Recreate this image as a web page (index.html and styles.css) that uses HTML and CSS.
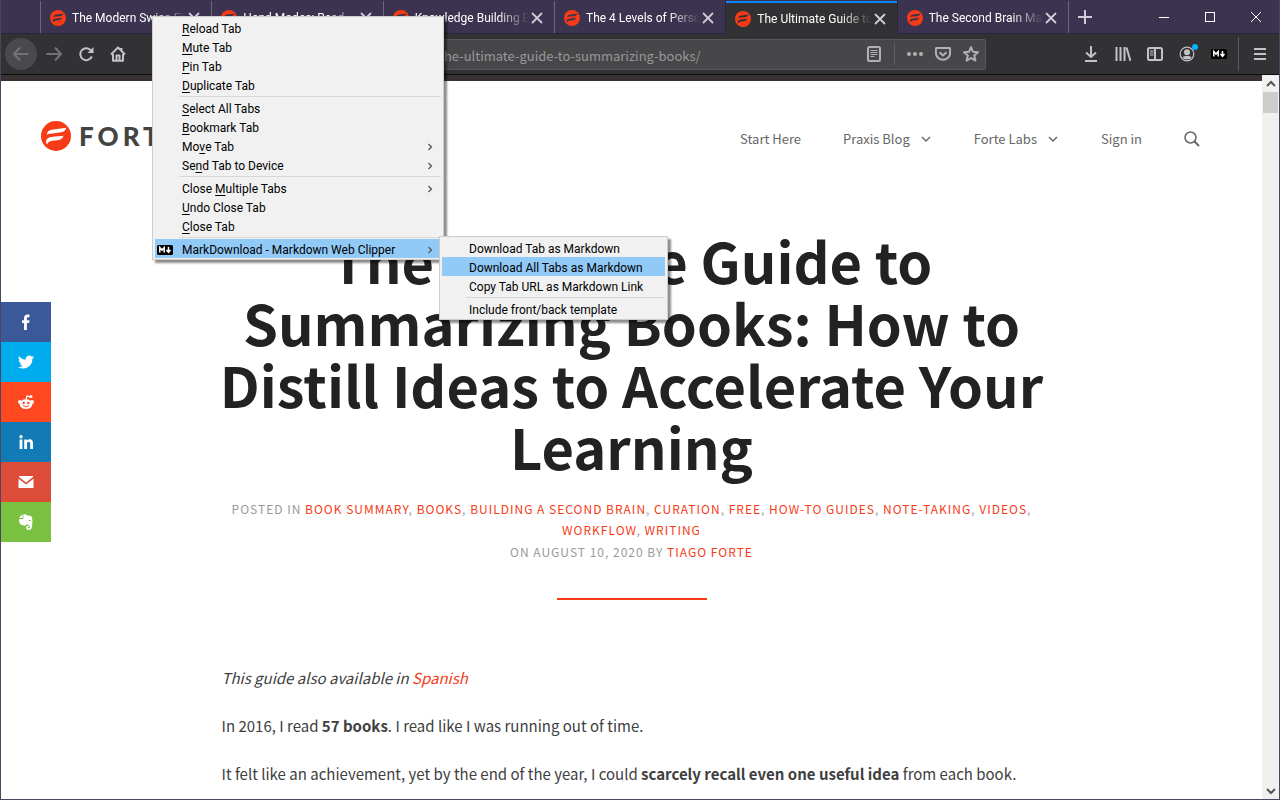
FILE: index.html
```html
<!DOCTYPE html>
<html lang="en">
<head>
<meta charset="utf-8">
<title>The Ultimate Guide to Summarizing Books</title>
<link rel="stylesheet" href="styles.css">
</head>
<body>
<svg class="defs" aria-hidden="true">
  <symbol id="forte" viewBox="0 0 32 32">
    <circle cx="16" cy="16" r="16" fill="#f63b16"/>
    <path class="swoosh" d="M6 14.500C7 10.500 9 9.500 13 9L27 7.200C26 10.500 24 11.800 20 12.300L12 13.200C9 13.500 7.500 13.500 6 14.500ZM5.500 21C7 17.800 9 17.300 13 16.900L24 15.600C23 18.800 21 20 17.500 20.400L12 21C9 21.500 7 22.500 6.500 25C5.500 23.500 5.200 22.500 5.500 21Z"/>
  </symbol>
  <symbol id="close" viewBox="0 0 16 16"><path d="M3.500 3.500l9 9M12.500 3.500l-9 9" fill="none" stroke="currentColor" stroke-width="1.800" stroke-linecap="round"/></symbol>
  <symbol id="chev" viewBox="0 0 10 10"><path d="M3.500 2l3 3-3 3" fill="none" stroke="currentColor" stroke-width="1.300"/></symbol>
  <symbol id="down" viewBox="0 0 12 12"><path d="M2 4l4 4 4-4" fill="none" stroke="currentColor" stroke-width="1.400"/></symbol>
  <symbol id="md" viewBox="0 0 16 10"><rect width="16" height="10" rx="1.500" fill="#000"/><path d="M2.800 7.500v-5l2.200 2.500 2.200-2.500v5M11.500 2v5M9.500 5l2 2.300 2-2.300" fill="none" stroke="#fff" stroke-width="1.500"/></symbol>
</svg>

<div class="window">
  <header class="tabbar">
    <div class="tabs" role="tablist">
      <div class="tab" role="tab"><svg class="fav"><use href="#forte"/></svg><span class="tab-title">The Modern Swiss Fit</span><button class="tab-close" aria-label="Close tab"><svg><use href="#close"/></svg></button></div>
      <div class="tab" role="tab"><svg class="fav"><use href="#forte"/></svg><span class="tab-title">Hand Modes: Read</span><button class="tab-close" aria-label="Close tab"><svg><use href="#close"/></svg></button></div>
      <div class="tab" role="tab"><svg class="fav"><use href="#forte"/></svg><span class="tab-title">Knowledge Building B</span><button class="tab-close" aria-label="Close tab"><svg><use href="#close"/></svg></button></div>
      <div class="tab" role="tab"><svg class="fav"><use href="#forte"/></svg><span class="tab-title">The 4 Levels of Person</span><button class="tab-close" aria-label="Close tab"><svg><use href="#close"/></svg></button></div>
      <div class="tab active" role="tab" aria-selected="true"><svg class="fav"><use href="#forte"/></svg><span class="tab-title">The Ultimate Guide to</span><button class="tab-close" aria-label="Close tab"><svg><use href="#close"/></svg></button></div>
      <div class="tab" role="tab"><svg class="fav"><use href="#forte"/></svg><span class="tab-title">The Second Brain Ma</span><button class="tab-close" aria-label="Close tab"><svg><use href="#close"/></svg></button></div>
    </div>
    <button class="new-tab" aria-label="New tab"><svg viewBox="0 0 16 16"><path d="M8 1v14M1 8h14" stroke="currentColor" stroke-width="2"/></svg></button>
    <div class="win-controls">
      <button aria-label="Minimize"><svg viewBox="0 0 12 12"><path d="M1 6.500h10" stroke="currentColor"/></svg></button>
      <button aria-label="Maximize"><svg viewBox="0 0 12 12"><rect x="1.500" y="1.500" width="9" height="9" fill="none" stroke="currentColor"/></svg></button>
      <button aria-label="Close"><svg viewBox="0 0 12 12"><path d="M1 1l10 10M11 1L1 11" stroke="currentColor"/></svg></button>
    </div>
  </header>

  <div class="toolbar">
    <button class="tool back" aria-label="Back"><svg viewBox="0 0 16 16"><path d="M15.500 8H1M7 1.500L1 8l6 6.500" class="line dim"/></svg></button>
    <button class="tool" aria-label="Forward"><svg viewBox="0 0 16 16"><path d="M.5 8H15M9 1.500L15 8l-6 6.500" class="line dim"/></svg></button>
    <button class="tool" aria-label="Reload"><svg viewBox="0 0 16 16"><path d="M13 4.500A6 6 0 1 0 13.800 10.500" class="line"/><path d="M15.500 1v6H9.500z" fill="currentColor"/></svg></button>
    <button class="tool" aria-label="Home"><svg viewBox="0 0 16 16"><path d="M1 8.500L8 1.500l7 7M3 8v6.800h10V8M11.500 2v3" class="line"/><path d="M6.500 15V9.500h3V15" class="line"/></svg></button>
    <div class="urlbar">
      <input type="text" aria-label="Address" value="the-ultimate-guide-to-summarizing-books/">
      <button aria-label="Reader view"><svg viewBox="0 0 16 16"><rect x="2" y="1" width="12" height="14" rx="1.500" class="line"/><path d="M4.500 4.500h7M4.500 6.500h7M4.500 8.500h7M4.500 10.500h4" stroke="currentColor"/></svg></button>
      <span class="url-sep"></span>
      <button aria-label="Page actions"><svg viewBox="0 0 16 16" fill="currentColor"><circle cx="2" cy="8" r="2"/><circle cx="8" cy="8" r="2"/><circle cx="14" cy="8" r="2"/></svg></button>
      <button aria-label="Save to Pocket"><svg viewBox="0 0 16 16"><path d="M1.500 2h13a.6.6 0 0 1 .6.600V7a7.100 6.800 0 0 1-14.200 0V2.600A.6.6 0 0 1 1.500 2zM4.500 6.200L8 9.500l3.500-3.300" class="line"/></svg></button>
      <button aria-label="Bookmark"><svg viewBox="0 0 16 16"><path d="M8 1.200l2 4.600 5 .5-3.800 3.300 1.200 5L8 12l-4.400 2.600 1.200-5L1 6.300l5-.5z" class="line"/></svg></button>
    </div>
    <div class="tools-right">
      <button class="tool" aria-label="Downloads"><svg viewBox="0 0 16 16"><path d="M8 0v11M3 6.500L8 11l5-4.500M2 15h12" class="line"/></svg></button>
      <button class="tool" aria-label="Library"><svg viewBox="0 0 16 16"><path d="M1.500 1v14M5.500 1v14M9.500 1v14M11.500 1.500l4 13.500" class="line"/></svg></button>
      <button class="tool" aria-label="Sidebars"><svg viewBox="0 0 16 16"><rect x="1" y="2" width="14" height="12" rx="1.500" class="line"/><path d="M8 2v12" class="line"/><path d="M3 5h3.500M3 7h3.500M3 9h3.500" stroke="currentColor"/></svg></button>
      <button class="tool account" aria-label="Account"><svg viewBox="0 0 16 16"><circle cx="8" cy="8" r="6.800" fill="none" stroke="currentColor" stroke-width="1.200"/><circle cx="8" cy="6.200" r="3" fill="currentColor"/><path d="M3.400 11.500C5 9.600 11 9.600 12.600 11.500 11 14 5 14 3.400 11.500z" fill="currentColor"/></svg></button>
      <button class="tool" aria-label="MarkDownload"><svg class="md-icon"><use href="#md"/></svg></button>
      <span class="tool-sep"></span>
      <button class="tool" aria-label="Open menu"><svg viewBox="0 0 16 16"><path d="M2 3h12M2 8h12M2 13h12" class="line"/></svg></button>
    </div>
  </div>

  <div class="viewport">
    <div class="page">
      <div class="site-head">
        <a class="logo" href="#"><svg><use href="#forte"/></svg><span>FORTE</span></a>
        <nav>
          <a href="#">Start Here</a>
          <a href="#">Praxis Blog <svg><use href="#down"/></svg></a>
          <a href="#">Forte Labs <svg><use href="#down"/></svg></a>
          <a href="#">Sign in</a>
          <a class="search" href="#" aria-label="Search"><svg viewBox="0 0 16 16"><circle cx="6.500" cy="6.500" r="5.500" fill="none" stroke="currentColor" stroke-width="1.500"/><path d="M10.500 10.500L15 15" stroke="currentColor" stroke-width="2"/></svg></a>
        </nav>
      </div>
      <article>
        <h1>The Ultimate Guide to Summarizing Books: How to Distill Ideas to Accelerate Your Learning</h1>
        <div class="meta">
          <p>Posted in <a href="#">Book Summary</a>, <a href="#">Books</a>, <a href="#">Building a Second Brain</a>, <a href="#">Curation</a>, <a href="#">Free</a>, <a href="#">How-To Guides</a>, <a href="#">Note-Taking</a>, <a href="#">Videos</a>, <a href="#">Workflow</a>, <a href="#">Writing</a></p>
          <p>on August 10, 2020 by <a href="#">Tiago Forte</a></p>
        </div>
        <hr>
        <div class="body">
          <p><em>This guide also available in <a href="#">Spanish</a></em></p>
          <p>In 2016, I read <strong>57 books</strong>. I read like I was running out of time.</p>
          <p>It felt like an achievement, yet by the end of the year, I could <strong>scarcely recall even one useful idea</strong> from each book.</p>
        </div>
      </article>
      <div class="share">
        <a class="fb" href="#" aria-label="Facebook"><svg viewBox="0 0 16 16"><path d="M6 16V9H4V6.200h2V4.500C6 1.800 7.300.6 9.500.6c1 0 1.800.1 2 .1v2.500h-1.400C9 3.200 8.900 3.800 8.900 4.500v1.700h2.600L11.100 9H8.900v7z"/></svg></a>
        <a class="tw" href="#" aria-label="Twitter"><svg viewBox="0 0 24 24"><path d="M24 4.600a10 10 0 0 1-2.800.8 5 5 0 0 0 2.100-2.700 10 10 0 0 1-3.100 1.200 4.900 4.900 0 0 0-8.400 4.500A14 14 0 0 1 1.700 3.200a4.900 4.900 0 0 0 1.500 6.500 4.900 4.900 0 0 1-2.200-.6 4.900 4.900 0 0 0 3.900 4.900 5 5 0 0 1-2.200.1 4.900 4.900 0 0 0 4.600 3.400A9.900 9.900 0 0 1 0 19.500a14 14 0 0 0 21.500-12.400A10 10 0 0 0 24 4.600z"/></svg></a>
        <a class="rd" href="#" aria-label="Reddit"><svg viewBox="0 0 16 16"><path d="M8 6l1-4 3.500.8" fill="none" stroke="#fff" stroke-width="1.300"/><circle cx="13" cy="2.500" r="1.500"/><circle cx="2" cy="8" r="2"/><circle cx="14" cy="8" r="2"/><ellipse cx="8" cy="10.200" rx="6.300" ry="4.900"/><circle class="hole" cx="5.700" cy="9" r="1.200"/><circle class="hole" cx="10.300" cy="9" r="1.200"/><path class="smile" d="M5 11.700q3 2.200 6 0"/></svg></a>
        <a class="li" href="#" aria-label="LinkedIn"><svg viewBox="0 0 16 16"><circle cx="3" cy="2.800" r="1.700"/><path d="M1.600 5.500h2.800V15H1.600zM6.200 5.500h2.700v1.300c.5-.9 1.600-1.500 2.800-1.500 2.700 0 3.300 1.700 3.300 4.200V15h-2.800v-4.800c0-1.200-.1-2.400-1.500-2.400S9 9 9 10.200V15H6.200z"/></svg></a>
        <a class="gm" href="#" aria-label="Email"><svg viewBox="0 0 16 16"><path d="M1 2h14v1L8 8.500 1 3zM.5 4.800L8 10.500l7.500-5.700V14H.5z"/></svg></a>
        <a class="ev" href="#" aria-label="Evernote"><svg viewBox="0 0 16 16"><path d="M4.500 0v4H1zM5.300.5C7 0 8.500.3 9 1.500c2 0 4 .2 4.600 1C14.700 5 14.500 9 14 13c-.3 2-1.500 3-3.500 3-1.800 0-2.500-1-2.500-2.200 0-1.600 1-2.300 3-2.100v1.200c-1 0-1.500.3-1.400 1 .1.600 1 .7 1.700.4.800-.4.800-1.800.3-2.500-1.200-.6-2.200-.8-2.600-2-.5 1.500-1.500 2-3.200 1.600C3 10.900 2 10.500 1.500 8.500 1.100 7 1 6 1 4.900h4.300zM10.500 7h2.200c0-1.300-2-1.600-2.200 0z" fill-rule="evenodd"/></svg></a>
      </div>
    </div>
    <div class="scrollbar" aria-hidden="true">
      <svg viewBox="0 0 12 12"><path d="M2 8l4-4 4 4"/></svg>
      <div class="track"><div class="thumb"></div></div>
      <svg viewBox="0 0 12 12"><path d="M2 4l4 4 4-4"/></svg>
    </div>
  </div>

  <div class="menu tab-menu" role="menu">
    <button role="menuitem"><u>R</u>eload Tab</button>
    <button role="menuitem"><u>M</u>ute Tab</button>
    <button role="menuitem"><u>P</u>in Tab</button>
    <button role="menuitem"><u>D</u>uplicate Tab</button>
    <div class="sep" role="separator"></div>
    <button role="menuitem"><u>S</u>elect All Tabs</button>
    <button role="menuitem"><u>B</u>ookmark Tab</button>
    <button role="menuitem">Mo<u>v</u>e Tab<svg class="more"><use href="#chev"/></svg></button>
    <button role="menuitem">Se<u>n</u>d Tab to Device<svg class="more"><use href="#chev"/></svg></button>
    <div class="sep" role="separator"></div>
    <button role="menuitem">Close <u>M</u>ultiple Tabs<svg class="more"><use href="#chev"/></svg></button>
    <button role="menuitem"><u>U</u>ndo Close Tab</button>
    <button role="menuitem"><u>C</u>lose Tab</button>
    <div class="sep" role="separator"></div>
    <button class="on has-icon" role="menuitem"><svg class="md-icon"><use href="#md"/></svg>MarkDownload - Markdown Web Clipper<svg class="more"><use href="#chev"/></svg></button>
  </div>
  <div class="menu sub-menu" role="menu">
    <button role="menuitem">Download Tab as Markdown</button>
    <button class="on" role="menuitem">Download All Tabs as Markdown</button>
    <button role="menuitem">Copy Tab URL as Markdown Link</button>
    <div class="sep" role="separator"></div>
    <button role="menuitem">Include front/back template</button>
  </div>
</div>
</body>
</html>
```
FILE: styles.css
```css
* { box-sizing: border-box; }
body {
  margin: 0;
  font-family: Roboto, "Noto Sans", sans-serif;
  font-size: 12px;
  line-height: 18px;
}
button {
  border: 0;
  padding: 0;
  background: none;
  color: inherit;
  font: inherit;
}
a { color: inherit; text-decoration: none; }
svg { display: block; flex: none; }
.defs { position: absolute; width: 0; height: 0; }
.line { fill: none; stroke: currentColor; stroke-width: 2; stroke-linejoin: round; }
.md-icon { width: 16px; height: 10px; }

.window {
  position: relative;
  display: flex;
  flex-direction: column;
  height: 100vh;
  border: 1px solid #4b4660;
  border-top: 0;
  overflow: hidden;
}

/* Tab strip */
.tabbar {
  display: flex;
  height: 34px;
  padding-left: 39px;
  background: #3b334f;
  border-bottom: 1px solid #29243a;
  color: #fff;
}
.tabs { display: flex; flex: 0 1 1029px; min-width: 0; }
.tab {
  --hole: #3b334f;
  display: flex;
  flex: 1;
  align-items: center;
  min-width: 0;
  padding: 2px 9px 0 9px;
  border-left: 1px solid #6d6780;
  margin-top: 1px;
  color: #fff;
}
.tab:last-child { border-right: 1px solid #6d6780; }
.tab.active {
  --hole: #323234;
  height: 33px;
  background: #323234;
  border-left-color: #29243a;
  box-shadow: inset 0 2px #0a84ff;
}
.tab.active + .tab { border-left-color: #29243a; }
.fav { width: 16px; height: 16px; margin-right: 6px; }
.swoosh { fill: var(--hole); }
.tab-title {
  flex: 1;
  min-width: 0;
  overflow: hidden;
  white-space: nowrap;
  -webkit-mask-image: linear-gradient(to right, #000 calc(100% - 32px), transparent);
  mask-image: linear-gradient(to right, #000 calc(100% - 32px), transparent);
}
.tab-close { color: #cfccd6; }
.tab-close svg { width: 16px; height: 16px; }
.new-tab { width: 32px; color: #d0cdd8; }
.new-tab svg { width: 16px; height: 16px; margin: auto; }
.win-controls { display: flex; margin-left: auto; }
.win-controls button { width: 46px; }
.win-controls svg { width: 12px; height: 12px; margin: auto; }

/* Toolbar */
.toolbar {
  display: flex;
  align-items: center;
  height: 41px;
  padding: 0 3px 0 4px;
  background: #323234;
  border-bottom: 1px solid #0c0c0d;
  color: #c3c3c5;
}
.tool { display: grid; place-items: center; width: 32px; height: 32px; }
.tool svg:not(.md-icon) { width: 16px; height: 16px; }
.dim { stroke: #727274; }
.back { margin-right: 1px; border-radius: 50%; background: #4a4a4c; }
.urlbar {
  display: flex;
  align-items: center;
  flex: 1;
  height: 31px;
  margin-left: 20px;
  background: #474749;
  border: 1px solid #59595b;
  border-radius: 2px;
}
.urlbar input {
  flex: 1;
  min-width: 0;
  padding: 2px 0 0 284px;
  border: 0;
  background: none;
  color: #97979a;
  font: 13px "Noto Sans CJK SC", "Noto Sans", sans-serif;
}
.urlbar button { display: grid; place-items: center; width: 28px; color: #b1b1b3; }
.urlbar svg { width: 16px; height: 16px; }
.url-sep { width: 1px; height: 22px; margin: 0 6px; background: #5d6068; }
.tools-right { display: flex; align-items: center; margin-left: 89px; }
.account { position: relative; }
.account::after {
  content: "";
  position: absolute;
  top: 6px;
  right: 5px;
  width: 6px;
  height: 6px;
  border-radius: 50%;
  background: #00b3ff;
}
.tool-sep { width: 1px; height: 34px; margin: 0 5px 0 3px; background: #5a5a5c; }

/* Web page */
.viewport { display: flex; flex: 1; min-height: 0; }
.page {
  --hole: #fff;
  position: relative;
  flex: 1;
  overflow: hidden;
  border-top: 6px solid #383132;
  background: #fff;
  color: #404040;
  font-family: "Noto Sans CJK SC", "Noto Sans", sans-serif;
}
.site-head {
  display: flex;
  align-items: center;
  justify-content: space-between;
  height: 110px;
  padding: 0 62px 0 40px;
}
.logo {
  display: flex;
  align-items: center;
  gap: 8px;
  color: #444;
  font: 900 26px "Lato", sans-serif;
  letter-spacing: 4px;
}
.logo svg { width: 30px; height: 30px; }
nav { display: flex; align-items: center; gap: 42px; color: #666; font-size: 13px; line-height: 24px; padding-top: 6px; }
nav a { display: flex; align-items: center; gap: 10px; }
nav svg { width: 12px; height: 12px; }
nav .search svg { width: 16px; height: 16px; }
article { max-width: 820px; margin: 38px auto 0; }
h1 {
  margin: 0 -10px;
  color: #222;
  font-size: 56px;
  font-weight: 700;
  line-height: 62px;
  text-align: center;
}
.meta {
  margin-top: 21px;
  color: #999;
  font-size: 12px;
  line-height: 21px;
  letter-spacing: 1px;
  text-align: center;
  text-transform: uppercase;
}
.meta p { margin: 0 0 1px; }
.meta a, .body a { color: #f63b16; }
hr { width: 150px; height: 2px; margin: 36px auto 64px; border: 0; background: #f63b16; }
.body { font-size: 15px; line-height: 28px; }
.body p { margin: 0 0 20px; }

.share { position: absolute; left: 0; top: 221px; width: 50px; }
.share a { display: grid; place-items: center; height: 40px; fill: #fff; }
.share svg { width: 16px; height: 16px; }
.fb { background: #3b5998; }
.tw { background: #00aced; }
.rd { background: #ff4720; }
.li { background: #127bb6; }
.gm { background: #dd4b39; }
.ev { background: #7ac142; }
.hole { fill: #ff4720; }
.smile { fill: none; stroke: #ff4720; }

.scrollbar { display: flex; flex-direction: column; align-items: center; width: 17px; background: #f0f0f0; }
.scrollbar svg { width: 12px; height: 12px; margin: 3px 0 2px; fill: none; stroke: #555; stroke-width: 2; }
.track { flex: 1; width: 15px; }
.thumb { height: 21px; background: #cdcdcd; }

/* Context menus */
.menu {
  position: absolute;
  padding: 1px 2px;
  background: #f1f1f1;
  border: 1px solid #ccc;
  box-shadow: 3px 3px 2px rgba(0, 0, 0, .45);
  color: #000;
}
.tab-menu { left: 151px; top: 16px; width: 292px; }
.sub-menu { left: 438px; top: 236px; width: 229px; }
.menu button {
  display: flex;
  align-items: center;
  width: 100%;
  height: 19px;
  padding: 2px 6px 0 27px;
  white-space: pre;
}
.menu .on { background: #91c9f7; }
.menu .has-icon { padding-left: 2px; }
.menu .md-icon { margin-right: 9px; }
.menu u { text-underline-offset: 2px; }
.more { width: 10px; height: 10px; margin-left: auto; color: #555; }
.sep { height: 1px; margin: 2px 0 1px 24px; background: #d7d7d7; }
```
